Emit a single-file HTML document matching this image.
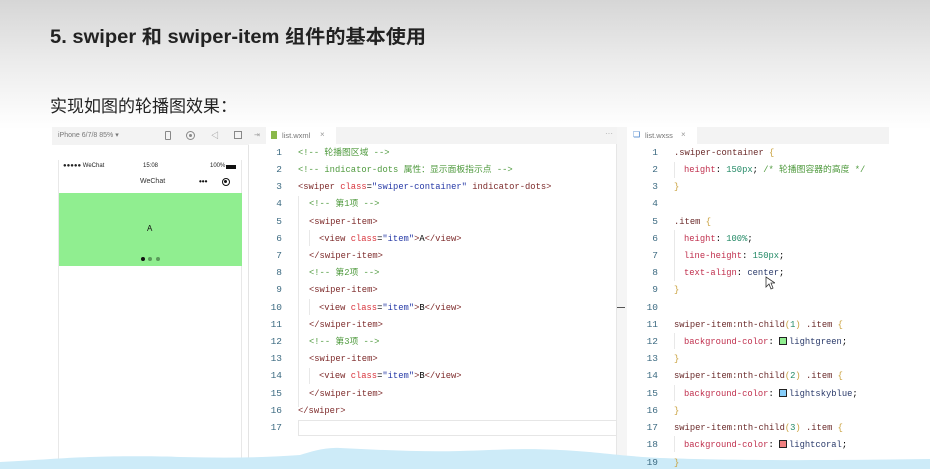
<!DOCTYPE html>
<html><head><meta charset="utf-8"><style>
*{margin:0;padding:0;box-sizing:border-box}
body{width:930px;height:469px;overflow:hidden;position:relative;font-family:"Liberation Sans","Noto Sans CJK SC",sans-serif;background:linear-gradient(#d6d6d6 0px,#ebebeb 60px,#fafafa 110px,#fff 130px)}
.abs{position:absolute}
h1{position:absolute;left:50px;top:22px;font-size:19px;font-weight:bold;color:#222;transform:scaleX(1.06);transform-origin:left}
.sub{position:absolute;left:50px;top:92px;font-size:17px;color:#222}
.code{font-family:"Liberation Mono","Noto Sans CJK SC",monospace;font-size:8.8px;white-space:pre;line-height:12px}
.code div{line-height:12px}
.ln{position:absolute;width:20px;text-align:right;color:#3d6b82;font-family:"Liberation Mono",monospace;font-size:9.5px}
.t{color:#7d2a2a}.a{color:#d8343c}.s{color:#2639a6}.c{color:#4f9a3e}
.p{color:#c0304e}.v{color:#238a66}.b{color:#c9a03c}.sel{color:#6a2a2a}.n{color:#2a3a6a}
.sw{display:inline-block;width:8px;height:8px;border:1px solid #222;vertical-align:-1px;margin-right:2px}
</style></head><body>
<h1>5. swiper 和 swiper-item 组件的基本使用</h1>
<div class="sub">实现如图的轮播图效果：</div>

<div class="abs" style="left:52px;top:127px;width:197px;height:342px;background:#fff;border-right:1px solid #e4e4e4"></div>
<div class="abs" style="left:52px;top:127px;width:197px;height:18px;background:#f3f3f3"></div>
<div class="abs" style="left:58px;top:131px;font-size:7px;color:#777">iPhone 6/7/8 85% ▾</div>
<div class="abs" style="left:165px;top:131px;width:6px;height:9px;border:1px solid #888;border-radius:1px"></div>
<div class="abs" style="left:186px;top:131px;width:9px;height:9px;border:1px solid #888;border-radius:50%"><div style="margin:2px;width:3px;height:3px;background:#888;border-radius:50%"></div></div>
<div class="abs" style="left:211px;top:130px;font-size:8px;color:#888">◁</div>
<div class="abs" style="left:234px;top:131px;width:8px;height:8px;border:1px solid #888"></div>
<div class="abs" style="left:58px;top:160px;width:184px;height:309px;background:#fff;border-left:1px solid #e8e8e8;border-right:1px solid #e8e8e8"></div>
<div class="abs" style="left:63px;top:163px;font-size:6px;color:#222">●●●●● WeChat</div>
<div class="abs" style="left:143px;top:163px;font-size:6px;color:#222">15:08</div>
<div class="abs" style="left:210px;top:163px;font-size:6px;color:#222">100%</div>
<div class="abs" style="left:226px;top:165px;width:10px;height:4px;background:#111"></div>
<div class="abs" style="left:140px;top:178px;font-size:7px;color:#333">WeChat</div>
<div class="abs" style="left:199px;top:177px;font-size:8px;color:#111;font-weight:bold">•••</div>
<div class="abs" style="left:222px;top:178px;width:8px;height:8px;border:1.3px solid #111;border-radius:50%"><div style="margin:1.3px;width:3px;height:3px;background:#111;border-radius:50%"></div></div>
<div class="abs" style="left:59px;top:193px;width:183px;height:73px;background:#90ee90"></div>
<div class="abs" style="left:147px;top:224px;font-size:8px;color:#111">A</div>
<div class="abs" style="left:141px;top:257px;width:4px;height:4px;border-radius:50%;background:#111"></div>
<div class="abs" style="left:148px;top:257px;width:4px;height:4px;border-radius:50%;background:#5a9a5a"></div>
<div class="abs" style="left:156px;top:257px;width:4px;height:4px;border-radius:50%;background:#5a9a5a"></div>

<div class="abs" style="left:249px;top:127px;width:368px;height:342px;background:#fff;border-right:1px solid #e6e6e6"></div>
<div class="abs" style="left:249px;top:127px;width:368px;height:17px;background:#f3f3f3"></div>
<div class="abs" style="left:266px;top:127px;width:70px;height:17px;background:#fff"></div>
<div class="abs" style="left:254px;top:131px;font-size:7px;color:#999">⇥</div>
<div class="abs" style="left:271px;top:131px;width:6px;height:8px;background:#8ab84a"></div>
<div class="abs" style="left:282px;top:131px;font-size:7.5px;color:#777">list.wxml</div>
<div class="abs" style="left:320px;top:130px;font-size:8px;color:#999">×</div>
<div class="abs" style="left:605px;top:129px;font-size:8px;color:#aaa">···</div>
<div class="abs" style="left:617px;top:127px;width:10px;height:342px;background:#f5f5f5"></div>
<div class="abs" style="left:617px;top:307px;width:8px;height:1px;background:#555"></div>
<div class="abs" style="left:298px;top:420px;width:319px;height:16px;border:1px solid #e6e6e6"></div>
<div class="abs" style="left:298px;top:196px;width:1px;height:211px;background:#e8e8e8"></div>
<div class="abs" style="left:309px;top:230px;width:1px;height:16px;background:#e8e8e8"></div>
<div class="abs" style="left:309px;top:299px;width:1px;height:16px;background:#e8e8e8"></div>
<div class="abs" style="left:309px;top:368px;width:1px;height:16px;background:#e8e8e8"></div>

<div class="abs" style="left:627px;top:127px;width:262px;height:342px;background:#fff"></div>
<div class="abs" style="left:627px;top:127px;width:262px;height:17px;background:#f3f3f3"></div>
<div class="abs" style="left:627px;top:127px;width:70px;height:17px;background:#fff"></div>
<div class="abs" style="left:633px;top:130px;font-size:8px;color:#3a7ac8">❏</div>
<div class="abs" style="left:645px;top:131px;font-size:7.5px;color:#777">list.wxss</div>
<div class="abs" style="left:681px;top:130px;font-size:8px;color:#999">×</div>
<div class="abs" style="left:674px;top:162px;width:1px;height:16px;background:#e8e8e8"></div>
<div class="abs" style="left:674px;top:230px;width:1px;height:51px;background:#e8e8e8"></div>
<div class="abs" style="left:674px;top:333px;width:1px;height:16px;background:#e8e8e8"></div>
<div class="abs" style="left:674px;top:385px;width:1px;height:16px;background:#e8e8e8"></div>
<div class="abs" style="left:674px;top:436px;width:1px;height:16px;background:#e8e8e8"></div>

<svg class="abs" style="left:0;top:0" width="930" height="469"><path d="M0 469 L0 462 C40 460 60 458 90 457 C120 456 160 456 180 457 C220 458 260 458 300 455 C310 452 325 447 340 448 C380 450 420 452 460 451 C500 450 520 448 560 450 C600 452 620 456 660 458 C720 460 800 461 930 459 L930 469Z" fill="#cdebf8"/></svg>

<div class="abs code" style="left:0;top:0">
<div class="ln" style="left:262px;top:147px">1</div><div class="abs" style="left:298px;top:147px"><span class="c">&lt;!-- 轮播图区域 --&gt;</span></div>
<div class="ln" style="left:262px;top:164px">2</div><div class="abs" style="left:298px;top:164px"><span class="c">&lt;!-- indicator-dots 属性：显示面板指示点 --&gt;</span></div>
<div class="ln" style="left:262px;top:181px">3</div><div class="abs" style="left:298px;top:181px"><span class="t">&lt;swiper</span> <span class="a">class</span>=<span class="s">"swiper-container"</span> <span class="t">indicator-dots&gt;</span></div>
<div class="ln" style="left:262px;top:198px">4</div><div class="abs" style="left:309px;top:198px"><span class="c">&lt;!-- 第1项 --&gt;</span></div>
<div class="ln" style="left:262px;top:216px">5</div><div class="abs" style="left:309px;top:216px"><span class="t">&lt;swiper-item&gt;</span></div>
<div class="ln" style="left:262px;top:233px">6</div><div class="abs" style="left:319px;top:233px"><span class="t">&lt;view</span> <span class="a">class</span>=<span class="s">"item"</span><span class="t">&gt;</span>A<span class="t">&lt;/view&gt;</span></div>
<div class="ln" style="left:262px;top:250px">7</div><div class="abs" style="left:309px;top:250px"><span class="t">&lt;/swiper-item&gt;</span></div>
<div class="ln" style="left:262px;top:267px">8</div><div class="abs" style="left:309px;top:267px"><span class="c">&lt;!-- 第2项 --&gt;</span></div>
<div class="ln" style="left:262px;top:284px">9</div><div class="abs" style="left:309px;top:284px"><span class="t">&lt;swiper-item&gt;</span></div>
<div class="ln" style="left:262px;top:302px">10</div><div class="abs" style="left:319px;top:302px"><span class="t">&lt;view</span> <span class="a">class</span>=<span class="s">"item"</span><span class="t">&gt;</span>B<span class="t">&lt;/view&gt;</span></div>
<div class="ln" style="left:262px;top:319px">11</div><div class="abs" style="left:309px;top:319px"><span class="t">&lt;/swiper-item&gt;</span></div>
<div class="ln" style="left:262px;top:336px">12</div><div class="abs" style="left:309px;top:336px"><span class="c">&lt;!-- 第3项 --&gt;</span></div>
<div class="ln" style="left:262px;top:353px">13</div><div class="abs" style="left:309px;top:353px"><span class="t">&lt;swiper-item&gt;</span></div>
<div class="ln" style="left:262px;top:370px">14</div><div class="abs" style="left:319px;top:370px"><span class="t">&lt;view</span> <span class="a">class</span>=<span class="s">"item"</span><span class="t">&gt;</span>B<span class="t">&lt;/view&gt;</span></div>
<div class="ln" style="left:262px;top:388px">15</div><div class="abs" style="left:309px;top:388px"><span class="t">&lt;/swiper-item&gt;</span></div>
<div class="ln" style="left:262px;top:405px">16</div><div class="abs" style="left:298px;top:405px"><span class="t">&lt;/swiper&gt;</span></div>
<div class="ln" style="left:262px;top:422px">17</div>

<div class="ln" style="left:638px;top:147px">1</div><div class="abs" style="left:674px;top:147px"><span class="sel">.swiper-container</span> <span class="b">{</span></div>
<div class="ln" style="left:638px;top:164px">2</div><div class="abs" style="left:684px;top:164px"><span class="p">height</span>: <span class="v">150px</span>; <span class="c">/* 轮播图容器的高度 */</span></div>
<div class="ln" style="left:638px;top:181px">3</div><div class="abs" style="left:674px;top:181px"><span class="b">}</span></div>
<div class="ln" style="left:638px;top:198px">4</div>
<div class="ln" style="left:638px;top:216px">5</div><div class="abs" style="left:674px;top:216px"><span class="sel">.item</span> <span class="b">{</span></div>
<div class="ln" style="left:638px;top:233px">6</div><div class="abs" style="left:684px;top:233px"><span class="p">height</span>: <span class="v">100%</span>;</div>
<div class="ln" style="left:638px;top:250px">7</div><div class="abs" style="left:684px;top:250px"><span class="p">line-height</span>: <span class="v">150px</span>;</div>
<div class="ln" style="left:638px;top:267px">8</div><div class="abs" style="left:684px;top:267px"><span class="p">text-align</span>: <span class="n">center</span>;</div>
<div class="ln" style="left:638px;top:284px">9</div><div class="abs" style="left:674px;top:284px"><span class="b">}</span></div>
<div class="ln" style="left:638px;top:302px">10</div>
<div class="ln" style="left:638px;top:319px">11</div><div class="abs" style="left:674px;top:319px"><span class="sel">swiper-item:nth-child</span><span class="b">(</span><span class="v">1</span><span class="b">)</span> <span class="sel">.item</span> <span class="b">{</span></div>
<div class="ln" style="left:638px;top:336px">12</div><div class="abs" style="left:684px;top:336px"><span class="p">background-color</span>: <span class="sw" style="background:#90ee90"></span><span class="n">lightgreen</span>;</div>
<div class="ln" style="left:638px;top:353px">13</div><div class="abs" style="left:674px;top:353px"><span class="b">}</span></div>
<div class="ln" style="left:638px;top:370px">14</div><div class="abs" style="left:674px;top:370px"><span class="sel">swiper-item:nth-child</span><span class="b">(</span><span class="v">2</span><span class="b">)</span> <span class="sel">.item</span> <span class="b">{</span></div>
<div class="ln" style="left:638px;top:388px">15</div><div class="abs" style="left:684px;top:388px"><span class="p">background-color</span>: <span class="sw" style="background:#87cefa"></span><span class="n">lightskyblue</span>;</div>
<div class="ln" style="left:638px;top:405px">16</div><div class="abs" style="left:674px;top:405px"><span class="b">}</span></div>
<div class="ln" style="left:638px;top:422px">17</div><div class="abs" style="left:674px;top:422px"><span class="sel">swiper-item:nth-child</span><span class="b">(</span><span class="v">3</span><span class="b">)</span> <span class="sel">.item</span> <span class="b">{</span></div>
<div class="ln" style="left:638px;top:439px">18</div><div class="abs" style="left:684px;top:439px"><span class="p">background-color</span>: <span class="sw" style="background:#f08080"></span><span class="n">lightcoral</span>;</div>
<div class="ln" style="left:638px;top:457px">19</div><div class="abs" style="left:674px;top:457px"><span class="b">}</span></div>
</div>
<svg class="abs" style="left:765px;top:276px" width="10" height="14"><path d="M1 1 L1 11 L4 8 L6 13 L8 12 L6 7 L10 7 Z" fill="#fff" stroke="#333" stroke-width="0.8"/></svg>
</body></html>
